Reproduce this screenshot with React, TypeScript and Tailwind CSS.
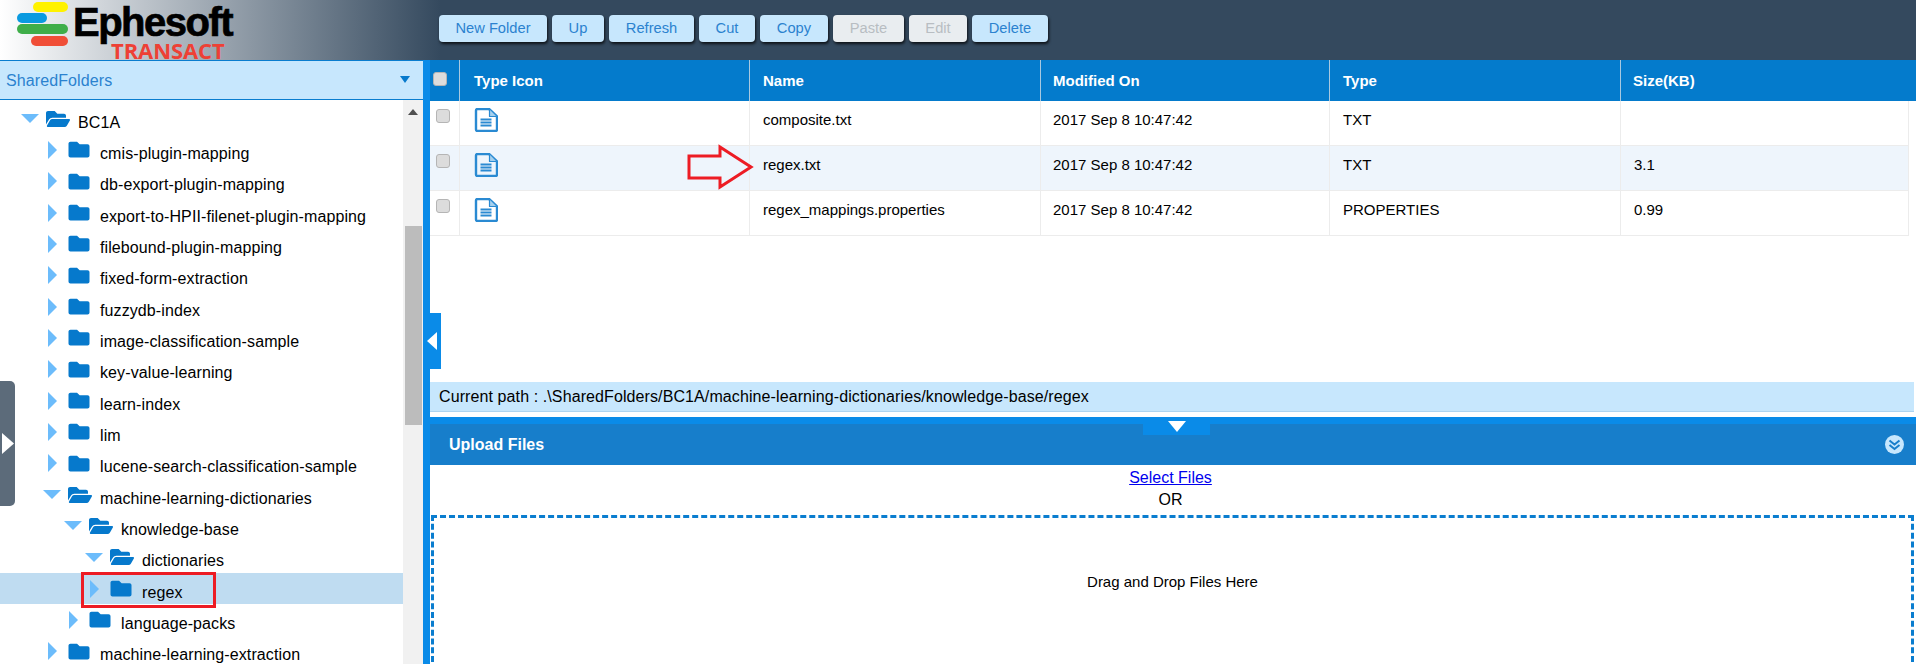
import React from "react";
import { FaFolder, FaFolderOpen } from "react-icons/fa";

const font = { fontFamily: '"Liberation Sans", Arial, sans-serif' };

type Node = { name: string; level: 0 | 1 | 2 | 3; open?: boolean; selected?: boolean };

const tree: Node[] = [
  { name: "BC1A", level: 0, open: true },
  { name: "cmis-plugin-mapping", level: 1 },
  { name: "db-export-plugin-mapping", level: 1 },
  { name: "export-to-HPII-filenet-plugin-mapping", level: 1 },
  { name: "filebound-plugin-mapping", level: 1 },
  { name: "fixed-form-extraction", level: 1 },
  { name: "fuzzydb-index", level: 1 },
  { name: "image-classification-sample", level: 1 },
  { name: "key-value-learning", level: 1 },
  { name: "learn-index", level: 1 },
  { name: "lim", level: 1 },
  { name: "lucene-search-classification-sample", level: 1 },
  { name: "machine-learning-dictionaries", level: 1, open: true },
  { name: "knowledge-base", level: 2, open: true },
  { name: "dictionaries", level: 3, open: true },
  { name: "regex", level: 3, selected: true },
  { name: "language-packs", level: 2 },
  { name: "machine-learning-extraction", level: 1 },
];

const indent = ["pl-[21px]", "pl-[43px]", "pl-[64px]", "pl-[85px]"];

const buttons = [
  { label: "New Folder", w: "w-[108px]" },
  { label: "Up", w: "w-[52px]" },
  { label: "Refresh", w: "w-[85px]" },
  { label: "Cut", w: "w-[56px]" },
  { label: "Copy", w: "w-[68px]" },
  { label: "Paste", w: "w-[71px]", off: true },
  { label: "Edit", w: "w-[58px]", off: true },
  { label: "Delete", w: "w-[76px]" },
];

const files = [
  { name: "composite.txt", type: "TXT", size: "" },
  { name: "regex.txt", type: "TXT", size: "3.1" },
  { name: "regex_mappings.properties", type: "PROPERTIES", size: "0.99" },
];

const cols = "grid grid-cols-[29px_290px_291px_289px_291px_289px]";
const headerPad = ["pl-[14px]", "pl-[13px]", "pl-[12px]", "pl-[13px]", "pl-[12px]"];

function FileIcon() {
  return (
    <svg width="24" height="24" viewBox="0 0 24 24" fill="none" stroke="#2a8ad2" strokeWidth="2.4" strokeLinejoin="round">
      <path d="M2 2.5a1.5 1.5 0 0 1 1.5-1.5H15l8 7.5v13a1.5 1.5 0 0 1-1.5 1.5h-18A1.5 1.5 0 0 1 2 21.5z" />
      <path d="M15.5 1.5v7h7" strokeWidth="1.2" fill="#a5d0ee" />
      <path d="M6.5 11.5h11M6.5 14.5h11M6.5 17.5h11" strokeWidth="2" />
    </svg>
  );
}

function Check() {
  return <span className="block h-[14px] w-[14px] rounded-[3px] border border-[#b5b5b5] bg-[#dcdcdc]" />;
}

function Logo() {
  return (
    <div className="relative h-[60px] w-[240px] shrink-0">
      <span className="absolute left-[33px] top-[2px] h-[10px] w-[35px] rounded-[5px] bg-[#fff200]" />
      <span className="absolute left-[17px] top-[13px] h-[10px] w-[30px] rounded-[5px] bg-[#0a9ae0]" />
      <span className="absolute left-[17px] top-[24px] h-[10px] w-[51px] rounded-[5px] bg-[#3fae49]" />
      <span className="absolute left-[31px] top-[36px] h-[10px] w-[37px] rounded-[5px] bg-[#f04e37]" />
      <span className="absolute left-[73px] top-[4px] text-[40px] font-bold leading-[37px] tracking-[-1.5px] text-black [-webkit-text-stroke:0.7px_black]">Ephesoft</span>
      <span className="absolute left-[111px] top-[41px] text-[22px] font-bold leading-[18px] tracking-[-0.1px] text-[#ee4035]" style={{ fontFamily: '"Open Sans", sans-serif' }}>TRANSACT</span>
    </div>
  );
}

export default function App() {
  return (
    <div className="flex h-[664px] w-[1916px] flex-col overflow-hidden bg-white text-black" style={font}>
      <header className="flex h-[60px] shrink-0 items-start bg-[linear-gradient(to_right,#ffffff_0%,#34495e_23%)]">
        <Logo />
        <nav className="ml-[199px] mt-[15px] flex gap-[5px]">
          {buttons.map((b) => (
            <span
              key={b.label}
              className={`flex h-[27px] items-center justify-center rounded-[4px] text-[14.7px] shadow-[1px_2px_3px_rgba(0,0,0,0.75)] ${b.w} ${b.off ? "bg-[#e9edf0] text-[#b8bdc2]" : "bg-[#c7e7fd] text-[#2b82cf]"}`}
            >
              {b.label}
            </span>
          ))}
        </nav>
      </header>

      <div className="flex min-h-0 flex-1">
        <aside className="relative flex w-[423px] shrink-0 flex-col">
          <div className="flex h-[40px] shrink-0 items-center justify-between border-y border-[#0a7dcf] bg-[#c7e7fd] pl-[6px] pr-[13px] text-[16px] tracking-[0.1px] text-[#2b82cf]">
            <span className="pt-px">SharedFolders</span>
            <svg width="10" height="7" viewBox="0 0 10 7" className="-mt-[2px]"><path d="M0 0h10L5 7z" fill="#0679cc" /></svg>
          </div>
          <div className="flex min-h-0 flex-1">
            <ul className="min-w-0 flex-1 pt-[3px]">
              {tree.map((n) => (
                <li key={n.name} className={`flex h-[31.33px] items-center ${indent[n.level]} ${n.selected ? "bg-[#bfdcf1]" : ""}`}>
                  <span className="flex w-[25px] shrink-0">
                    {n.open ? (
                      <svg width="18" height="9" viewBox="0 0 18 9"><path d="M0 0h18L9 9z" fill="#6cbcfb" /></svg>
                    ) : (
                      <svg width="9" height="18" viewBox="0 0 9 18" className="ml-[5px]"><path d="M0 0l9 9-9 9z" fill="#6cbcfb" /></svg>
                    )}
                  </span>
                  <span className="flex w-[32px] shrink-0 text-[#0679cc]">
                    {n.open ? <FaFolderOpen className="h-[22px] w-[24px]" /> : <FaFolder className="h-[21px] w-[22px]" />}
                  </span>
                  <span className="whitespace-nowrap pt-[8px] text-[16px] leading-[18px] tracking-[0.1px]">{n.name}</span>
                </li>
              ))}
            </ul>
            <div className="flex w-[20px] shrink-0 flex-col items-end bg-[#f1f1f1]">
              <svg width="10" height="6" viewBox="0 0 10 6" className="mr-[5px] mt-[9px] shrink-0"><path d="M5 0l5 6H0z" fill="#505050" /></svg>
              <span className="mr-[1px] mt-[111px] h-[199px] w-[17px] shrink-0 bg-[#bcbcbc]" />
            </div>
          </div>
          <span className="absolute left-0 top-[321px] flex h-[125px] w-[15px] items-center rounded-r-[5px] bg-[#5c6b7a]">
            <svg width="12" height="21" viewBox="0 0 12 21" className="ml-[2px]"><path d="M0 0l12 10.5L0 21z" fill="#fff" /></svg>
          </span>
          <span className="absolute left-[81px] top-[512px] h-[36px] w-[135px] border-[3px] border-[#ed1c24]" />
        </aside>

        <main className="relative flex min-w-0 flex-1 flex-col border-l-[7px] border-[#0a8be8]">
          <section className="flex h-[322px] shrink-0 flex-col">
            <div className={`${cols} h-[41px] shrink-0 bg-[#047bcc] pr-[7px] text-[15px] font-bold text-white`}>
              <span className="pl-[3px] pt-[12px]"><Check /></span>
              {["Type Icon", "Name", "Modified On", "Type", "Size(KB)"].map((h, i) => (
                <span key={h} className={`flex items-center border-l border-[#a9c9e0] pt-[1px] ${headerPad[i]}`}>{h}</span>
              ))}
            </div>
            {files.map((f, i) => (
              <div key={f.name} className={`${cols} h-[45px] shrink-0 border-b border-[#ececec] text-[15px] w-[1479px] ${i === 1 ? "bg-[#eef5fc]" : ""}`}>
                <span className="pl-[6px] pt-[8px]"><Check /></span>
                <span className="border-l border-[#ececec] pl-[14px] pt-[7px]"><FileIcon /></span>
                <span className="border-l border-[#ececec] pl-[13px] pt-[8px]">{f.name}</span>
                <span className="border-l border-[#ececec] pl-[12px] pt-[8px]">2017 Sep 8 10:47:42</span>
                <span className="border-l border-[#ececec] pl-[13px] pt-[8px]">{f.type}</span>
                <span className="border-l border-[#ececec] border-r pl-[13px] pt-[8px]">{f.size}</span>
              </div>
            ))}
          </section>

          <div className="flex h-[30px] shrink-0 items-center border-b border-[#aed4f0] bg-[#c7e7fd] pl-[9px] text-[16px] tracking-[0.1px] mr-[2px]">
            Current path : .\SharedFolders/BC1A/machine-learning-dictionaries/knowledge-base/regex
          </div>
          <div className="h-[5px] shrink-0" />
          <div className="h-[7px] shrink-0 bg-[#0a8be8]" />
          <div className="flex h-[41px] shrink-0 items-center justify-between bg-[#177ecb] pl-[19px] pr-[12px] text-[16px] font-bold text-white">
            <span>Upload Files</span>
            <svg width="19" height="19" viewBox="0 0 19 19">
              <circle cx="9.5" cy="9.5" r="9.5" fill="#c7e7fd" />
              <path d="M4.5 5.5l5 4 5-4M4.5 10l5 4 5-4" fill="none" stroke="#177ecb" strokeWidth="2" />
            </svg>
          </div>
          <div className="pt-[2px] text-center text-[16px] leading-[22px] mr-[5px]">
            <a className="text-[#0000ee] underline">Select Files</a>
            <div>OR</div>
          </div>
          <div className="ml-px mr-[2px] mt-[4px] h-[200px] shrink-0 border-[3px] border-dashed border-[#0a7dcf] pt-[54px] text-center text-[15px] leading-[20px]">
            Drag and Drop Files Here
          </div>

          <span className="absolute left-0 top-[253px] flex h-[56px] w-[11px] items-center bg-[#0a8be8]">
            <svg width="10" height="18" viewBox="0 0 10 18" className="-ml-[3px]"><path d="M10 0v18L0 9z" fill="#fff" /></svg>
          </span>
          <span className="absolute left-[713px] top-[357px] flex h-[18px] w-[67px] items-start justify-center bg-[#0a8be8] pt-[4px]">
            <svg width="18" height="11" viewBox="0 0 18 11"><path d="M0 0h18L9 11z" fill="#fff" /></svg>
          </span>
          <svg width="68" height="46" viewBox="0 0 68 46" className="absolute left-[257px] top-[84px]">
            <path d="M2 12h31V3l31 20-31 20v-9H2z" fill="none" stroke="#ed1c24" strokeWidth="3" />
          </svg>
        </main>
      </div>
    </div>
  );
}
